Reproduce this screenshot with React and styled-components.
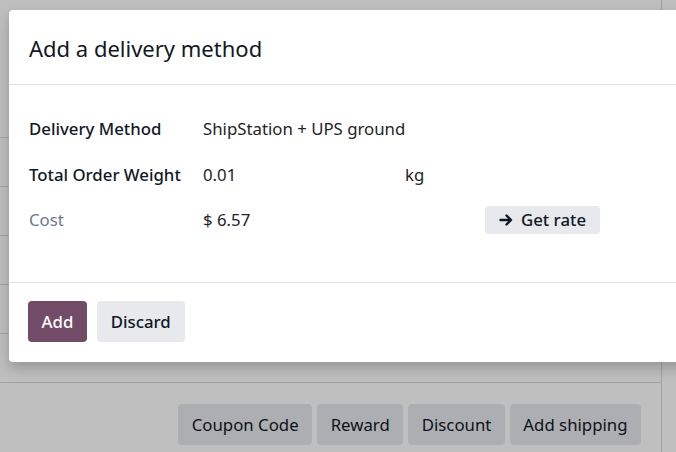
import React from 'react';
import styled, { createGlobalStyle } from 'styled-components';

const GlobalStyle = createGlobalStyle`
  html, body {
    margin: 0;
    padding: 0;
  }
  body {
    font-family: 'Noto Sans', 'Open Sans', sans-serif;
    color: #1f2328;
    overflow: hidden;
  }
`;

const Page = styled.div`
  position: relative;
  width: 676px;
  height: 452px;
  overflow: hidden;
  background: #fff;
`;

const Sheet = styled.div`
  display: flex;
  flex-direction: column;
  height: 100%;
  border-right: 1px solid #d8d8d8;
  width: 662px;
  box-sizing: border-box;
`;

const TableRows = styled.div`
  display: flex;
  flex-direction: column;
  padding-top: 137px;
  height: 245px;
`;

const TableRow = styled.div`
  height: 51px;
  border-top: 1px solid #d8d8d8;
  box-sizing: border-box;
`;

const Separator = styled.div`
  border-top: 1px solid #d8d8d8;
`;

const ActionBar = styled.div`
  display: flex;
  justify-content: flex-end;
  gap: 5px;
  padding: 21px 20px 0 0;
`;

const ActionButton = styled.button`
  font-family: inherit;
  font-size: 16.8px;
  color: #111827;
  background: #e7e9ed;
  border: none;
  border-radius: 4px;
  height: 41px;
  padding: 0 13.5px;
  white-space: nowrap;
`;

const Backdrop = styled.div`
  position: absolute;
  inset: 0;
  background: rgba(0, 0, 0, 0.25);
`;

const Modal = styled.div`
  position: absolute;
  left: 9px;
  top: 10px;
  width: 720px;
  height: 352px;
  background: #fff;
  border-radius: 4px;
  box-shadow: 0 6px 14px rgba(0, 0, 0, 0.22);
  display: flex;
  flex-direction: column;
`;

const Header = styled.div`
  height: 75px;
  display: flex;
  align-items: center;
  padding: 0 20px;
  border-bottom: 1px solid #dee2e6;
  box-sizing: border-box;
`;

const Title = styled.h4`
  margin: 0;
  font-size: 22px;
  font-weight: 400;
  color: #111827;
  margin-top: 1px;
`;

const Body = styled.div`
  height: 197px;
  box-sizing: border-box;
  padding: 21px 20px 0;
  display: flex;
  flex-direction: column;
`;

const FieldRow = styled.div`
  display: grid;
  grid-template-columns: 174px 202px 80px auto;
  align-items: center;
  height: 45.5px;
  font-size: 16.8px;
  white-space: nowrap;
`;

const Label = styled.div`
  font-weight: ${(p) => (p.muted ? 400 : 500)};
  color: ${(p) => (p.muted ? '#6b7a8c' : '#111827')};
`;

const Value = styled.div`
  color: #1f2328;
  grid-column: ${(p) => (p.wide ? '2 / span 3' : 'auto')};
`;

const SmallButton = styled.button`
  font-family: inherit;
  font-size: 16.8px;
  font-weight: 500;
  color: #111827;
  background: #e7e9ed;
  border: none;
  border-radius: 4px;
  height: 28px;
  padding: 0 14px 0 14px;
  display: inline-flex;
  align-items: center;
  gap: 7px;
  justify-self: start;
`;

const Footer = styled.div`
  flex: 1;
  border-top: 1px solid #dee2e6;
  display: flex;
  align-items: flex-start;
  gap: 10px;
  padding: 18px 19px 0;
`;

const FooterButton = styled.button`
  font-family: inherit;
  font-size: 16.8px;
  font-weight: 500;
  height: 41px;
  padding: 0 ${(p) => (p.primary ? 13.5 : 14)}px;
  border: none;
  border-radius: 4px;
  color: ${(p) => (p.primary ? '#fff' : '#111827')};
  background: ${(p) => (p.primary ? '#714b67' : '#e7e9ed')};
`;

const Arrow = () => (
  <svg width="15" height="14" viewBox="0 0 15 14" aria-hidden="true">
    <path d="M1.5 7h10M7.5 2.5L12 7l-4.5 4.5" fill="none" stroke="#111827" strokeWidth="2.4" strokeLinecap="round" strokeLinejoin="round" />
  </svg>
);

const App = () => (
  <Page>
    <GlobalStyle />
    <Sheet>
      <TableRows>
        {[0, 1, 2, 3, 4].map((i) => (
          <TableRow key={i} />
        ))}
      </TableRows>
      <Separator />
      <ActionBar>
        <ActionButton>Coupon Code</ActionButton>
        <ActionButton>Reward</ActionButton>
        <ActionButton>Discount</ActionButton>
        <ActionButton>Add shipping</ActionButton>
      </ActionBar>
    </Sheet>
    <Backdrop />
    <Modal>
      <Header>
        <Title>Add a delivery method</Title>
      </Header>
      <Body>
        <FieldRow>
          <Label>Delivery Method</Label>
          <Value wide>ShipStation + UPS ground</Value>
        </FieldRow>
        <FieldRow>
          <Label>Total Order Weight</Label>
          <Value>0.01</Value>
          <Value>kg</Value>
        </FieldRow>
        <FieldRow>
          <Label muted>Cost</Label>
          <Value>$ 6.57</Value>
          <span />
          <SmallButton>
            <Arrow />
            Get rate
          </SmallButton>
        </FieldRow>
      </Body>
      <Footer>
        <FooterButton primary>Add</FooterButton>
        <FooterButton>Discard</FooterButton>
      </Footer>
    </Modal>
  </Page>
);

export default App;
